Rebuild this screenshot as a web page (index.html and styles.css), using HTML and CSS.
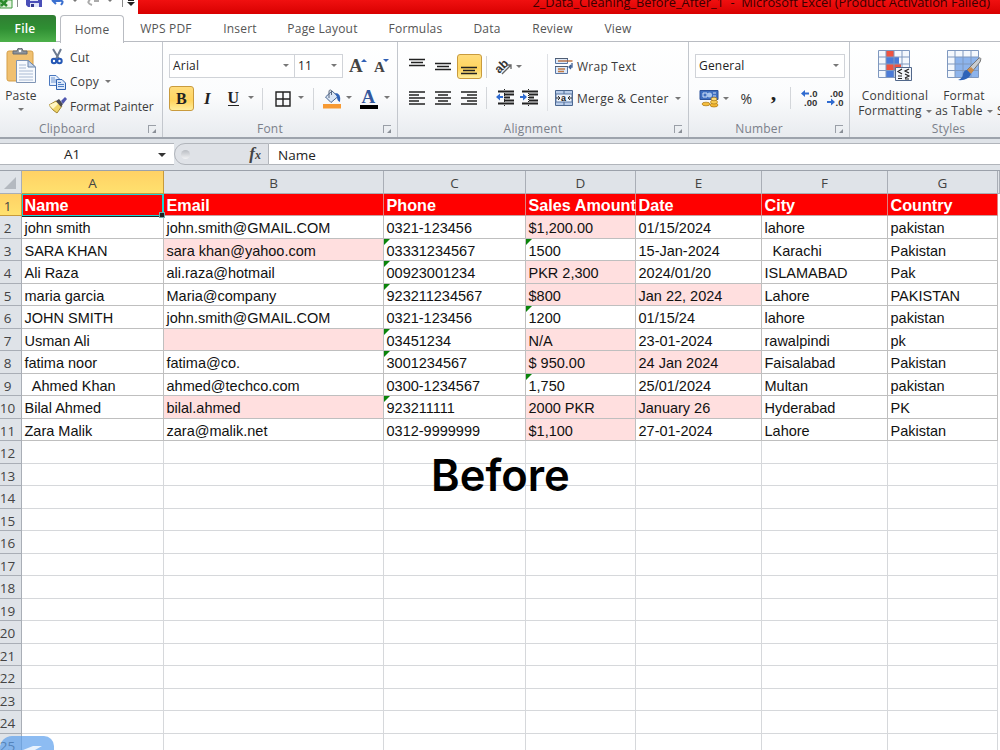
FILE: index.html
```
<!DOCTYPE html>
<html lang="en">
<head>
    <meta charset="UTF-8">
    <meta name="viewport" content="width=device-width, initial-scale=1.0">
    <title>2_Data_Cleaning_Before_After_1 - Microsoft Excel</title>
    <link rel="stylesheet" href="styles.css">
</head>
<body>
    <div class="app">
        <div class="titlebar">
            <div class="quick-access">
                <svg width="138" height="14" viewBox="0 0 138 14">
                    <path d="M0 0H12V8H0z" fill="#e6f2e0" stroke="#3c9a3c"/>
                    <path d="M0 0L7 6M7 0L1 6" stroke="#2b8a2b" stroke-width="2.5"/>
                    <path d="M17.5 0V7M122.5 0V7" stroke="#8a8a8a"/>
                    <path d="M26 0H42V7H28L26 5z" fill="#4a4fb8"/>
                    <path d="M30 0H38V1H30zM30 3H39V7H30z" fill="#dfe4f6"/>
                    <path d="M31 4H34V7H31z" fill="#33388f"/>
                    <path d="M52 0L56 4M53 1H59Q65 0 61 5" fill="none" stroke="#3a6fd0" stroke-width="2"/>
                    <path d="M73 0H77L75 2zM108 0H112L110 2z" fill="#777"/>
                    <path d="M90 0Q86 3 92 5M94 1H99" fill="none" stroke="#aaa" stroke-width="2"/>
                    <path d="M128 0H134V1H128zM127 2H135L131 6z" fill="#222"/>
                </svg>
            </div>
            <div class="title">2_Data_Cleaning_Before_After_1 &nbsp;-&nbsp; Microsoft Excel (Product Activation Failed)</div>
        </div>

        <div class="tabs">
            <div class="tab tab-file">File</div>
            <div class="tab tab-active">Home</div>
            <div class="tab tab-wps">WPS PDF</div>
            <div class="tab tab-insert">Insert</div>
            <div class="tab tab-layout">Page Layout</div>
            <div class="tab tab-formulas">Formulas</div>
            <div class="tab tab-data">Data</div>
            <div class="tab tab-review">Review</div>
            <div class="tab tab-view">View</div>
        </div>

        <div class="ribbon">
            <div class="group clipboard">
                <div class="group-body">
                    <div class="paste">
                        <svg width="32" height="36" viewBox="0 0 32 36">
                            <path d="M2 5Q2 3 4 3H26Q28 3 28 5V31Q28 33 26 33H4Q2 33 2 31z" fill="#f0c070" stroke="#d59f48"/>
                            <path d="M8 6V3H12Q12 0 15 0T18 3H22V6z" fill="#8d939c" stroke="#666c75"/>
                            <circle cx="15" cy="3" r="1.3" fill="#fff"/>
                            <path d="M11.500 12.500H23L30.500 19V34.500H11.500z" fill="#f7fafe" stroke="#7f95b5"/>
                            <path d="M23 12.500V19H30.500z" fill="#cbd9ec" stroke="#6d86ab"/>
                            <path d="M14 17H21M14 20H21M14 23H28M14 26H28M14 29H28M14 32H28" stroke="#a9bad3"/>
                        </svg>
                        <span>Paste</span>
                        <i class="arrow"></i>
                    </div>
                    <div class="clip-list">
                        <div class="clip-item">
                            <svg width="18" height="18" viewBox="0 0 18 18">
                                <path d="M4 1L10 11M12 1L7 11" stroke="#6d7b90" stroke-width="2"/>
                                <circle cx="5" cy="13" r="2.200" fill="none" stroke="#2457b5" stroke-width="2"/>
                                <circle cx="10.500" cy="13" r="2.200" fill="none" stroke="#2457b5" stroke-width="2"/>
                            </svg>
                            <span>Cut</span>
                        </div>
                        <div class="clip-item">
                            <svg width="18" height="18" viewBox="0 0 18 18">
                                <path d="M.5 2.500H7L10.500 6V12.500H.5z" fill="#e9f1fc" stroke="#4a78bf"/>
                                <path d="M2 5H6M2 7H7M2 9H7" stroke="#6c95d2"/>
                                <path d="M7.500 6.500H13L16.500 10V16.500H7.500z" fill="#dbe8fa" stroke="#2f62b0"/>
                                <path d="M9 9.500H12M9 11.500H15M9 13.500H15" stroke="#4f80c8"/>
                            </svg>
                            <span>Copy</span>
                            <i class="arrow"></i>
                        </div>
                        <div class="clip-item painter">
                            <svg width="18" height="18" viewBox="0 0 18 18">
                                <path d="M0 8L7 4L13 9L8 16Q4 14 0 8z" fill="#f0d568" stroke="#a48632"/>
                                <path d="M0 8L7 5L9 7L4 12z" fill="#fff6c4"/>
                                <path d="M7 4L10 2L14 7L12 10z" fill="#4a4a56"/>
                                <path d="M12 4L16 0L18 2L14 7z" fill="#4f57b0"/>
                            </svg>
                            <span>Format Painter</span>
                        </div>
                    </div>
                </div>
                <div class="group-label">Clipboard</div>
                <i class="launcher"></i>
            </div>

            <div class="group font">
                <div class="group-body stack">
                    <div class="font-row">
                        <div class="select">Arial<i class="arrow"></i></div>
                        <div class="select select-size">11<i class="arrow"></i></div>
                        <div class="glyph grow">A<i class="tip tip-up"></i></div>
                        <div class="glyph shrink">A<i class="tip tip-down"></i></div>
                    </div>
                    <div class="font-tools">
                        <div class="glyph active">B</div>
                        <div class="glyph italic">I</div>
                        <div class="glyph underline">U</div>
                        <i class="arrow"></i>
                        <i class="sep"></i>
                        <svg width="16" height="16" viewBox="0 0 16 16">
                            <path d="M1 1H15V15H1zM8 1V15M1 8H15" fill="none" stroke="#222" stroke-width="1.400"/>
                        </svg>
                        <i class="arrow"></i>
                        <i class="sep"></i>
                        <svg width="20" height="20" viewBox="0 0 20 20">
                            <path d="M3.500 8L10 2L16 7.500L9 13.500z" fill="#d9e5f5" stroke="#48658f"/>
                            <path d="M7 9V3Q7 0 9.500 1.500V6" fill="none" stroke="#56657c"/>
                            <path d="M13 4Q19.500 4 18 13Q15 12 15 8z" fill="#2f63b8"/>
                            <path d="M1 15H19V19.500H1z" fill="#f79a33"/>
                        </svg>
                        <i class="arrow"></i>
                        <div class="glyph font-color">A</div>
                        <i class="arrow"></i>
                    </div>
                </div>
                <div class="group-label">Font</div>
                <i class="launcher"></i>
            </div>

            <div class="group alignment">
                <div class="group-body">
                    <div class="align-tools">
                        <svg width="16" height="20" viewBox="0 0 16 20"><path d="M0 2.500H16M2 5.500H14M0 8.500H16" stroke="#222" stroke-width="1.300"/></svg>
                        <svg width="16" height="20" viewBox="0 0 16 20"><path d="M0 6.500H16M2 9.500H14M0 12.500H16" stroke="#222" stroke-width="1.300"/></svg>
                        <div class="glyph active">
                            <svg width="16" height="20" viewBox="0 0 16 20"><path d="M0 10.500H16M2 13.500H14M0 16.500H16" stroke="#222" stroke-width="1.300"/></svg>
                        </div>
                        <i class="sep"></i>
                        <svg class="orient-icon" width="22" height="20" viewBox="-1 -1 22 20">
                            <text class="orient" x="-7" y="3" transform="translate(8 9) rotate(-45)">ab</text>
                            <path d="M8 16L17 7M13 7H17V11" fill="none" stroke="#666" stroke-width="1.300"/>
                        </svg>
                        <i class="arrow"></i>
                    </div>
                    <div class="align-tools align-rows">
                        <svg width="16" height="16" viewBox="0 0 16 16"><path d="M0 2H16M0 5H10M0 8H16M0 11H10M0 14H16" stroke="#222" stroke-width="1.400"/></svg>
                        <svg width="16" height="16" viewBox="0 0 16 16"><path d="M0 2H16M3 5H13M0 8H16M3 11H13M0 14H16" stroke="#222" stroke-width="1.400"/></svg>
                        <svg width="16" height="16" viewBox="0 0 16 16"><path d="M0 2H16M6 5H16M0 8H16M6 11H16M0 14H16" stroke="#222" stroke-width="1.400"/></svg>
                        <i class="sep"></i>
                        <svg width="18" height="18" viewBox="0 0 18 18">
                            <path d="M0 8L4 4.500V7H7V9H4V11.500z" fill="#2f6bd0"/>
                            <path d="M2 2.500H18M8 5.500H18M8 8.500H14M8 11.500H18M2 14.500H18" stroke="#222" stroke-width="1.800"/>
                            <path d="M8.500 0V18" stroke="#222" stroke-dasharray="1 1"/>
                        </svg>
                        <svg width="18" height="18" viewBox="0 0 18 18">
                            <path d="M7 8L3 4.500V7H0V9H3V11.500z" fill="#2f6bd0"/>
                            <path d="M2 2.500H18M9 5.500H18M9 8.500H14M9 11.500H18M2 14.500H18" stroke="#222" stroke-width="1.800"/>
                            <path d="M8.500 0V18" stroke="#222" stroke-dasharray="1 1"/>
                        </svg>
                    </div>
                </div>
                <div class="wrap-tools">
                    <div class="wrap-item">
                        <svg width="18" height="18" viewBox="0 0 18 18">
                            <path d="M.5 1.500H12.500V6.500H.5zM.5 9.500H12.500V16.500H.5z" fill="#dfe9f7" stroke="#5876a3"/>
                            <path d="M3 4H17.500" stroke="#b0602c" stroke-width="1.300"/>
                            <path d="M3 12H10M3 14.500H9" stroke="#c07a44" stroke-width="1.300"/>
                            <path d="M17 6V10H14M16 8L14 10L16 12" fill="none" stroke="#3e5f94" stroke-width="1.300"/>
                            <path d="M0 1.500H13M0 9.500H13" stroke="#4f5d73"/>
                        </svg>
                        <span>Wrap Text</span>
                    </div>
                    <div class="wrap-item">
                        <svg width="18" height="18" viewBox="0 0 18 18">
                            <path d="M.5 1.500H17.500V16.500H.5z" fill="#b9cdea" stroke="#4a668f"/>
                            <path d="M9 1V5M9 13V17" stroke="#4a668f"/>
                            <path d="M1 5H17V13H1z" fill="#eef4fc" stroke="#5876a3"/>
                            <path d="M1 9H5M3 7L5 9L3 11M17 9H13M15 7L13 9L15 11" fill="none" stroke="#333"/>
                            <text class="merge-a" x="6" y="12">a</text>
                        </svg>
                        <span>Merge &amp; Center</span>
                        <i class="arrow"></i>
                    </div>
                </div>
                <div class="group-label">Alignment</div>
                <i class="launcher"></i>
            </div>

            <div class="group number">
                <div class="group-body stack">
                    <div class="select">General<i class="arrow"></i></div>
                    <div class="number-tools">
                        <svg width="20" height="19" viewBox="0 0 20 19">
                            <path d="M1 1.500H19V10.500H1z" fill="#3f6fc0" stroke="#2c529a"/>
                            <path d="M4 4H8V8H4zM14 4H17M14 7H17" fill="none" stroke="#cfe0f8"/>
                            <circle cx="10.500" cy="6" r="2.500" fill="#a9c6ee"/>
                            <ellipse cx="15" cy="16" rx="4" ry="2" fill="#f2b632" stroke="#a87412" stroke-width=".7"/>
                            <ellipse cx="15" cy="13" rx="3.500" ry="2" fill="#f8cb50" stroke="#a87412" stroke-width=".7"/>
                            <ellipse cx="15" cy="10" rx="3" ry="1.800" fill="#fbdc7c" stroke="#a87412" stroke-width=".7"/>
                            <ellipse cx="7" cy="15" rx="4" ry="1.800" fill="#f4bd3c" stroke="#a87412" stroke-width=".7"/>
                        </svg>
                        <i class="arrow"></i>
                        <span class="percent">%</span>
                        <span class="comma">,</span>
                        <i class="sep"></i>
                        <svg class="decimal" width="19" height="18" viewBox="0 0 19 18">
                            <path d="M1 4.500L5 1V3.500H9V5.500H5V8z" fill="#2f6bd0"/>
                            <text x="9.500" y="8">.0</text>
                            <text x="4" y="17">.00</text>
                        </svg>
                        <svg class="decimal" width="19" height="18" viewBox="0 0 19 18">
                            <text x="4" y="8">.00</text>
                            <text x="9.500" y="17">.0</text>
                            <path d="M9 13L5 9.500V12H1V14H5V16.500z" fill="#2f6bd0"/>
                        </svg>
                    </div>
                </div>
                <div class="group-label">Number</div>
                <i class="launcher"></i>
            </div>

            <div class="group styles">
                <div class="group-body">
                    <div class="style-item conditional">
                        <svg width="36" height="33" viewBox="0 0 36 33">
                            <path d="M1.500 1.500H32.500V28.500H1.500z" fill="#f4f8fd"/>
                            <path d="M9 1.500H17V8H9zM9 15H24V21.500H9z" fill="#ee5340"/>
                            <path d="M9 8H22V15H9zM9 21.500H17V28.500H9z" fill="#4a7bd8"/>
                            <path d="M1.500 1.500H32.500V28.500H1.500zM9 1V28M17 1V28M25 1V28M1 8H32M1 15H32M1 21.500H32" fill="none" stroke="#7f98bf"/>
                            <path d="M18.500 18.500H34.500V31.500H18.500z" fill="#f2f6fb" stroke="#51678a"/>
                            <path d="M25 20L21 22.500L25 25M21 27H25M21 29.500H25M32 20L28 22L32 24M28 25L32 27L28 29M28 30H32" fill="none" stroke="#222" stroke-width="1.200"/>
                        </svg>
                        <span>Conditional</span>
                        <span>Formatting<i class="arrow"></i></span>
                    </div>
                    <div class="style-item as-table">
                        <svg width="36" height="33" viewBox="0 0 36 33">
                            <path d="M1.500 1.500H32.500V28.500H1.500z" fill="#f4f8fd"/>
                            <path d="M9 8H32V28H9z" fill="#8db4ec"/>
                            <path d="M1.500 1.500H32.500V28.500H1.500zM9 1V28M17 1V28M25 1V28M1 8H32M1 15H32M1 21.500H32" fill="none" stroke="#7f98bf"/>
                            <path d="M33 9Q36 8 34 13L25 24L21 21z" fill="#c9ccd0" stroke="#777"/>
                            <path d="M25 18L28 21L25 25L21 21z" fill="#c98a4b"/>
                            <path d="M21 21L25 25Q22 32 12 31Q17 29 17 25Q18 21 21 21z" fill="#2f63b8"/>
                        </svg>
                        <span>Format</span>
                        <span>as Table<i class="arrow"></i></span>
                    </div>
                    <div class="style-item cell-styles">
                        <span>S</span>
                    </div>
                </div>
                <div class="group-label">Styles</div>
            </div>
        </div>

        <div class="formula-bar">
            <div class="name-box">A1<i class="arrow"></i></div>
            <div class="fx-area"><i class="knob"></i><span class="fx">f<sub>x</sub></span></div>
            <div class="formula">Name</div>
        </div>

        <div class="sheet" id="sheet"></div>

        <div class="caption">Before</div>
        <div class="watermark">
            <svg width="54" height="14" viewBox="0 0 54 14"><path d="M23 14L33 10H42L35 14z" fill="#fff" opacity=".8"/></svg>
        </div>
    </div>
    <script src="sheet.js"></script>
</body>
</html>
```
FILE: styles.css
```
* {
    box-sizing: border-box;
}
body {
    margin: 0;
    font-family: "Open Sans", "Noto Sans", sans-serif;
    font-size: 12px;
    color: #3b3b3b;
    background: white;
}
svg {
    display: block;
    flex: none;
}
.app {
    position: relative;
    width: 1000px;
    height: 750px;
    overflow: hidden;
}

/* title bar */
.titlebar {
    display: flex;
    height: 14px;
    overflow: hidden;
}
.quick-access {
    width: 138px;
}
.title {
    flex: 1;
    height: 14px;
    padding-right: 10px;
    background: linear-gradient(#f01010, #d80000);
    color: #3a0000;
    font-size: 12.8px;
    line-height: 5px;
    text-align: right;
    white-space: nowrap;
}

/* tabs */
.tabs {
    display: flex;
    height: 28px;
    padding-top: 1px;
    border-bottom: 1px solid #b9bcc2;
}
.tab {
    height: 27px;
    line-height: 28px;
    text-align: center;
    color: #555;
    letter-spacing: 0.2px;
    white-space: nowrap;
}
.tab-file {
    width: 56px;
    padding-right: 6px;
    background: linear-gradient(#2f7d32, #2f8f33 50%, #4db04a);
    border-radius: 0 3px 0 0;
    color: white;
    font-weight: 600;
}
.tab-active {
    width: 64px;
    height: 28px;
    margin-left: 4px;
    background: white;
    border: 1px solid #b9bcc2;
    border-bottom: none;
    border-radius: 4px 4px 0 0;
    line-height: 27px;
}
.tab-wps { width: 84px; }
.tab-insert { width: 64px; }
.tab-layout { width: 101px; }
.tab-formulas { width: 85px; }
.tab-data { width: 58px; }
.tab-review { width: 73px; }
.tab-view { width: 58px; }

/* ribbon */
.ribbon {
    display: flex;
    height: 97px;
    background: linear-gradient(#ffffff, #fbfcfd 55%, #e8ebef);
    border-bottom: 2px solid #9da3ac;
}
.group {
    position: relative;
    display: flex;
    flex: none;
    flex-wrap: wrap;
    align-content: space-between;
    border-right: 1px solid #c3c7cd;
    letter-spacing: 0.2px;
    white-space: nowrap;
}
.clipboard { width: 163px; }
.font { width: 235px; }
.alignment { width: 291px; }
.number { width: 161px; }
.styles { width: 150px; border-right: none; }
.group-body {
    display: flex;
    height: 76px;
}
.group-label {
    width: 100%;
    height: 18px;
    padding-right: 28px;
    line-height: 20px;
    text-align: center;
    color: #7b808a;
}
.font .group-label { padding-right: 20px; }
.alignment .group-label { padding-right: 20px; }
.number .group-label { padding-right: 20px; }
.styles .group-label { padding: 0 0 0 47px; }
.launcher {
    position: absolute;
    right: 6px;
    bottom: 4px;
    width: 8px;
    height: 8px;
    border-top: 1px solid #9a9fa7;
    border-left: 1px solid #9a9fa7;
}
.launcher::after {
    content: "";
    position: absolute;
    right: 0;
    bottom: 0;
    border: 2.500px solid #8a8f97;
    border-top-color: transparent;
    border-left-color: transparent;
}
.arrow {
    display: inline-block;
    border: 3px solid transparent;
    border-top: 3.500px solid #777;
    border-bottom: none;
}
.sep {
    width: 1px;
    height: 22px;
    background: #d3d6da;
}

.paste {
    display: flex;
    flex-direction: column;
    align-items: center;
    width: 49px;
    padding: 6px 7px 0 0;
}
.paste span {
    line-height: 24px;
}
.clip-list {
    padding-top: 3px;
}
.clip-item {
    display: flex;
    align-items: center;
    gap: 3px;
    height: 24.5px;
}
.clip-item .arrow {
    margin-left: 3px;
}
.painter {
    letter-spacing: 0;
}

.stack {
    flex-direction: column;
    gap: 8px;
    padding: 12px 0 0 6px;
}
.select {
    display: flex;
    justify-content: space-between;
    align-items: center;
    height: 24px;
    padding: 0 5px 1px 3px;
    background: white;
    border: 1px solid #d0d3d8;
    color: #222;
}
.select-size {
    border-left: none;
}
.number .select {
    width: 150px;
}
.font-row {
    display: grid;
    grid-template-columns: 126px 48px 24px 22px;
    grid-template-rows: 24px;
    height: 24px;
}
.glyph {
    font-family: "Liberation Serif", serif;
    font-weight: bold;
    color: #222;
}
.grow, .shrink {
    display: flex;
    justify-content: flex-end;
    align-items: flex-start;
    font-size: 19px;
    line-height: 24px;
    color: #444;
}
.shrink {
    font-size: 15px;
    line-height: 27px;
}
.grow .tip, .shrink .tip {
    margin-left: -2px;
}
.tip {
    margin-top: 5px;
    border: 3px solid transparent;
}
.tip-up {
    border-top: none;
    border-bottom: 3px solid #2f5fb5;
}
.tip-down {
    border-bottom: none;
    border-top: 3px solid #2f5fb5;
}
.font-tools {
    display: grid;
    grid-template-columns: 25px 27px 25px 10px 13px 27px 10px 14px 24px 9px 31px 5px;
    align-items: center;
    justify-items: center;
    height: 25px;
}
.font-tools .glyph {
    font-size: 16px;
}
.font-tools .arrow {
    margin-bottom: 2px;
}
.active {
    display: flex;
    align-items: center;
    justify-content: center;
    width: 25px;
    height: 25px;
    background: linear-gradient(#ffdc7c, #ffd45e 60%, #ffee9c);
    border: 1px solid #c99b3d;
    border-radius: 3px;
}
.font-tools .italic {
    font-style: italic;
    font-size: 17px;
}
.font-tools .underline {
    border-bottom: 1px solid #222;
    line-height: 14px;
}
.font-tools .font-color {
    width: 18px;
    border-bottom: 4px solid black;
    color: #34589c;
    font-size: 19px;
    line-height: 16px;
    text-align: center;
}

.alignment .group-body {
    flex-direction: column;
    gap: 8px;
    padding: 12px 0 0 6px;
}
.align-tools {
    display: grid;
    grid-template-columns: 26px 26px 26px 8px 28px 2px;
    align-items: center;
    justify-items: center;
    width: 134px;
    height: 24px;
}
.align-rows {
    grid-template-columns: 26px 26px 26px 8px 29px 19px;
}
.orient-icon {
    overflow: visible;
}
.orient {
    font: bold 12px "Liberation Sans", sans-serif;
    fill: #333;
}
.merge-a {
    font: bold 9px "Liberation Sans", sans-serif;
    fill: #222;
}
.wrap-tools {
    display: flex;
    flex-direction: column;
    gap: 8px;
    height: 57px;
    margin: 12px 0 0 9px;
    padding-left: 7px;
    border-left: 1px solid #dfe1e5;
    letter-spacing: 0.25px;
}
.wrap-item {
    display: flex;
    align-items: center;
    gap: 4px;
    height: 24px;
}
.wrap-item .arrow {
    margin-left: 2px;
}

.number-tools {
    display: grid;
    grid-template-columns: 27px 8px 33px 21px 12px 27px 24px;
    align-items: center;
    justify-items: center;
    height: 24px;
}
.percent {
    font-size: 14px;
    color: #333;
}
.comma {
    height: 24px;
    font: bold 22px/13px "Liberation Serif", serif;
    color: #222;
}
.decimal {
    font: bold 9.5px "Liberation Sans", sans-serif;
    letter-spacing: 0;
    fill: #333;
}
.style-item {
    display: flex;
    flex-direction: column;
    align-items: center;
    padding-top: 7px;
    line-height: 15px;
}
.style-item svg {
    margin-bottom: 6px;
}
.style-item .arrow {
    margin: 0 0 2px 4px;
}
.conditional { width: 90px; }
.as-table { width: 48px; }
.cell-styles { padding: 61px 0 0 9px; }

/* formula bar */
.formula-bar {
    display: flex;
    height: 32px;
    padding: 4px 0 5px;
    background: #dfe3e8;
    border-bottom: 1px solid #9ba1aa;
    font-size: 13.5px;
    line-height: 23px;
    color: #222;
}
.name-box {
    display: flex;
    justify-content: space-between;
    align-items: center;
    width: 174px;
    padding: 1px 8px 0 64px;
    background: white;
    border-top: 1px solid #b1b5bb;
    border-bottom: 1px solid #b1b5bb;
}
.name-box .arrow {
    border-width: 4px;
    border-top-color: #333;
    border-bottom: none;
}
.fx-area {
    display: flex;
    justify-content: space-between;
    align-items: center;
    width: 95px;
    padding: 0 7px 0 6px;
    background: #dfe2e7;
    border: 1px solid #b1b5bb;
    border-radius: 11px 0 0 11px;
}
.knob {
    width: 9px;
    height: 9px;
    border-radius: 50%;
    background: linear-gradient(#b8bcc2, #f2f3f5);
}
.fx {
    font: italic bold 17px/20px "Liberation Serif", serif;
    color: #444;
}
.fx sub {
    font-size: 12px;
    vertical-align: 0;
}
.formula {
    flex: 1;
    padding-left: 9px;
    background: white;
    border-top: 1px solid #b1b5bb;
    border-bottom: 1px solid #b1b5bb;
}

/* sheet */
.sheet {
    font-family: "Liberation Sans", Arial, sans-serif;
    font-size: 14.5px;
    color: #111;
}
.row {
    display: grid;
    grid-template-columns: 22px 142px 220px 142px 110px 126px 126px 110px 2px;
    height: 23px;
}
.row:nth-child(even) {
    height: 22px;
}
.cell, .row-head, .col-head {
    padding-top: 3px;
    border-right: 1px solid #d6d8db;
    border-bottom: 1px solid #d6d8db;
    line-height: 18px;
    white-space: pre;
}
.cell {
    position: relative;
    padding-left: 2.500px;
}
.data .cell {
    border-color: #bfbfbf;
}
.row-head, .col-head {
    background: #dfe3e8;
    border-color: #a9aeb6;
    font-family: "Open Sans", sans-serif;
    font-size: 13.5px;
    color: #444;
    text-align: center;
}
.row-head {
    margin-left: -6px;
}
.header .cell {
    padding-top: 2px;
    background: red;
    border-right-color: #e08080;
    border-bottom-color: #c9a0a0;
    color: white;
    font-size: 16.2px;
    font-weight: bold;
    line-height: 19px;
}
.header .row-head, .col-head.current {
    background: linear-gradient(#ffd165, #ffe16e);
    border-color: #c79a3b;
}
.corner {
    display: flex;
    align-items: flex-end;
    justify-content: flex-end;
    padding: 0 5px 4px 0;
}
.corner::after {
    content: "";
    border: 6px solid #b4b9c0;
    border-top-color: transparent;
    border-left-color: transparent;
}
.flagged {
    background: #ffdfdf;
}
.as-text::before {
    content: "";
    position: absolute;
    left: 0;
    top: 0;
    border: 3px solid #0a840a;
    border-right-color: transparent;
    border-bottom-color: transparent;
}
.header .selected {
    z-index: 1;
    padding: 1px 0 0 1.5px;
    border: 1px solid #19d5d5;
    border-right-width: 2px;
    box-shadow: 0 1px #222;
}
.selected::after {
    content: "";
    position: absolute;
    right: -3px;
    bottom: -3px;
    width: 4px;
    height: 4px;
    background: #222;
    border: 1px solid #7aa;
    box-sizing: content-box;
}

.caption {
    position: absolute;
    left: 431px;
    top: 448px;
    font: 600 43.5px/54px Inter, sans-serif;
    color: black;
}
.watermark {
    position: absolute;
    left: 0;
    bottom: 0;
    border-radius: 12px 10px 0 0;
    background: rgba(92, 160, 236, 0.7);
}
```
FILE: sheet.js
```
const columns = ['A', 'B', 'C', 'D', 'E', 'F', 'G'];

// "!" marks a flagged cell, "^" a number stored as text
const data = [
    ['Name', 'Email', 'Phone', 'Sales Amount', 'Date', 'City', 'Country'],
    ['john smith', 'john.smith@GMAIL.COM', '0321-123456', '!$1,200.00', '01/15/2024', 'lahore', 'pakistan'],
    ['SARA KHAN', '!sara khan@yahoo.com', '^03331234567', '^1500', '15-Jan-2024', '  Karachi', 'Pakistan'],
    ['Ali Raza', 'ali.raza@hotmail', '^00923001234', '!PKR 2,300', '2024/01/20', 'ISLAMABAD', 'Pak'],
    ['maria garcia', 'Maria@company', '^923211234567', '!$800', '!Jan 22, 2024', 'Lahore', 'PAKISTAN'],
    ['JOHN SMITH', 'john.smith@GMAIL.COM', '0321-123456', '^1200', '01/15/24', 'lahore', 'pakistan'],
    ['Usman Ali', '!', '^03451234', '!N/A', '23-01-2024', 'rawalpindi', 'pk'],
    ['fatima noor', 'fatima@co.', '^3001234567', '!$ 950.00', '!24 Jan 2024', 'Faisalabad', 'Pakistan'],
    ['  Ahmed Khan', 'ahmed@techco.com', '0300-1234567', '^1,750', '25/01/2024', 'Multan', 'pakistan'],
    ['Bilal Ahmed', '!bilal.ahmed', '^923211111', '!2000 PKR', '!January 26', 'Hyderabad', 'PK'],
    ['Zara Malik', 'zara@malik.net', '0312-9999999', '!$1,100', '27-01-2024', 'Lahore', 'Pakistan']
];

const sheet = document.getElementById('sheet');

function addRow(className) {
    const row = document.createElement('div');
    row.className = 'row ' + className;
    sheet.appendChild(row);
    return row;
}

function addCell(row, className, text) {
    const cell = document.createElement('div');
    cell.className = className;
    cell.textContent = text;
    row.appendChild(cell);
}

const head = addRow('letters');
addCell(head, 'col-head corner', '');
columns.forEach((letter, i) => addCell(head, i === 0 ? 'col-head current' : 'col-head', letter));
addCell(head, 'col-head', '');

for (let r = 0; r < 25; r++) {
    const values = data[r];
    const row = addRow(r === 0 ? 'header' : values ? 'data' : 'empty');
    addCell(row, 'row-head', r + 1);
    columns.forEach((letter, c) => {
        let text = values ? values[c] : '';
        let className = 'cell';
        if (text[0] === '!') className += ' flagged';
        if (text[0] === '^') className += ' as-text';
        if (r === 0 && c === 0) className += ' selected';
        addCell(row, className, text.replace(/^[!^]/, ''));
    });
}
```
